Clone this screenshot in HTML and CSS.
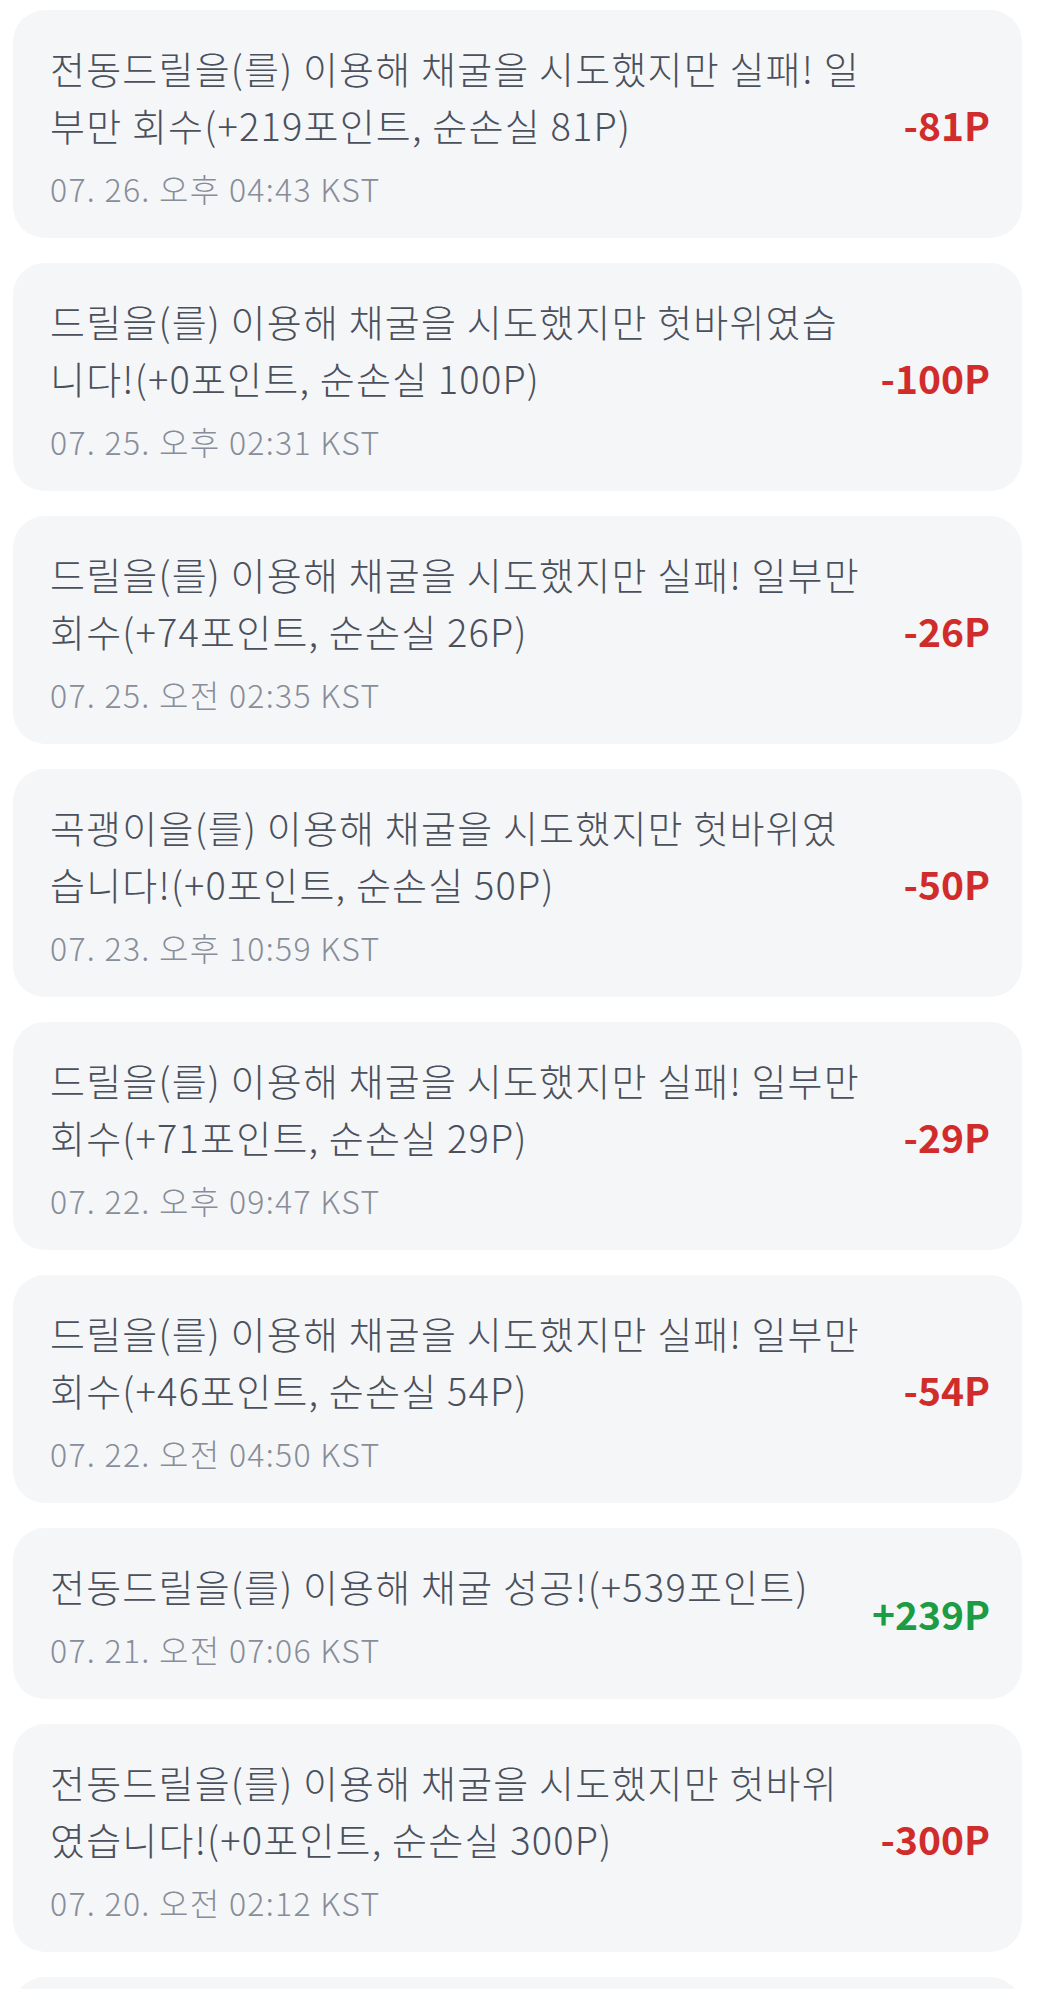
FILE: index.html
```html
<!DOCTYPE html>
<html>
<head>
  <meta charset="utf-8">
  <title>채굴 기록</title>
  <link rel="stylesheet" href="styles.css">
</head>
<body>
  <ul class="history">
    <li class="entry">
      <div class="info">
        <p class="desc">전동드릴을(를) 이용해 채굴을 시도했지만 실패! 일부만 회수(+219포인트, 순손실 81P)</p>
        <p class="time">07. 26. 오후 04:43 KST</p>
      </div>
      <span class="amount loss">-81P</span>
    </li>
    <li class="entry">
      <div class="info">
        <p class="desc">드릴을(를) 이용해 채굴을 시도했지만 헛바위였습니다!(+0포인트, 순손실 100P)</p>
        <p class="time">07. 25. 오후 02:31 KST</p>
      </div>
      <span class="amount loss">-100P</span>
    </li>
    <li class="entry">
      <div class="info">
        <p class="desc">드릴을(를) 이용해 채굴을 시도했지만 실패! 일부만 회수(+74포인트, 순손실 26P)</p>
        <p class="time">07. 25. 오전 02:35 KST</p>
      </div>
      <span class="amount loss">-26P</span>
    </li>
    <li class="entry">
      <div class="info">
        <p class="desc">곡괭이을(를) 이용해 채굴을 시도했지만 헛바위였습니다!(+0포인트, 순손실 50P)</p>
        <p class="time">07. 23. 오후 10:59 KST</p>
      </div>
      <span class="amount loss">-50P</span>
    </li>
    <li class="entry">
      <div class="info">
        <p class="desc">드릴을(를) 이용해 채굴을 시도했지만 실패! 일부만 회수(+71포인트, 순손실 29P)</p>
        <p class="time">07. 22. 오후 09:47 KST</p>
      </div>
      <span class="amount loss">-29P</span>
    </li>
    <li class="entry">
      <div class="info">
        <p class="desc">드릴을(를) 이용해 채굴을 시도했지만 실패! 일부만 회수(+46포인트, 순손실 54P)</p>
        <p class="time">07. 22. 오전 04:50 KST</p>
      </div>
      <span class="amount loss">-54P</span>
    </li>
    <li class="entry">
      <div class="info">
        <p class="desc">전동드릴을(를) 이용해 채굴 성공!(+539포인트)</p>
        <p class="time">07. 21. 오전 07:06 KST</p>
      </div>
      <span class="amount gain">+239P</span>
    </li>
    <li class="entry">
      <div class="info">
        <p class="desc">전동드릴을(를) 이용해 채굴을 시도했지만 헛바위였습니다!(+0포인트, 순손실 300P)</p>
        <p class="time">07. 20. 오전 02:12 KST</p>
      </div>
      <span class="amount loss">-300P</span>
    </li>
    <li class="entry">
      <div class="info">
        <p class="desc">전동드릴을(를) 이용해 채굴을 시도했지만 실패! 일부만 회수(+162포인트, 순손실 138P)</p>
        <p class="time">07. 19. 오후 11:20 KST</p>
      </div>
      <span class="amount loss">-138P</span>
    </li>
  </ul>
</body>
</html>
```

FILE: styles.css
```css
body {
  margin: 0;
  background-color: #fff;
  font-family: "Noto Sans CJK KR", "Noto Sans", sans-serif;
}

.history {
  list-style: none;
  margin: 0;
  padding: 10px 15px 0 13px;
  display: flex;
  flex-direction: column;
  gap: 25px;
}

.entry {
  display: flex;
  align-items: center;
  justify-content: space-between;
  gap: 34px;
  padding: 29px 32px 30px 37px;
  background-color: #f5f6f8;
  border-radius: 32px;
}

.info {
  flex: 1;
  min-width: 0;
}

.desc {
  margin: 0;
  font-size: 38px;
  font-weight: 300;
  line-height: 57px;
  letter-spacing: 1.2px;
  color: #4a505c;
}

.time {
  margin: 15px 0 0;
  font-size: 32px;
  font-weight: 300;
  line-height: 40px;
  letter-spacing: 1.3px;
  color: #878d99;
}

.amount {
  flex-shrink: 0;
  font-size: 39px;
  font-weight: 700;
}

.loss {
  color: #d12c2c;
}

.gain {
  color: #1b9c45;
}
```
